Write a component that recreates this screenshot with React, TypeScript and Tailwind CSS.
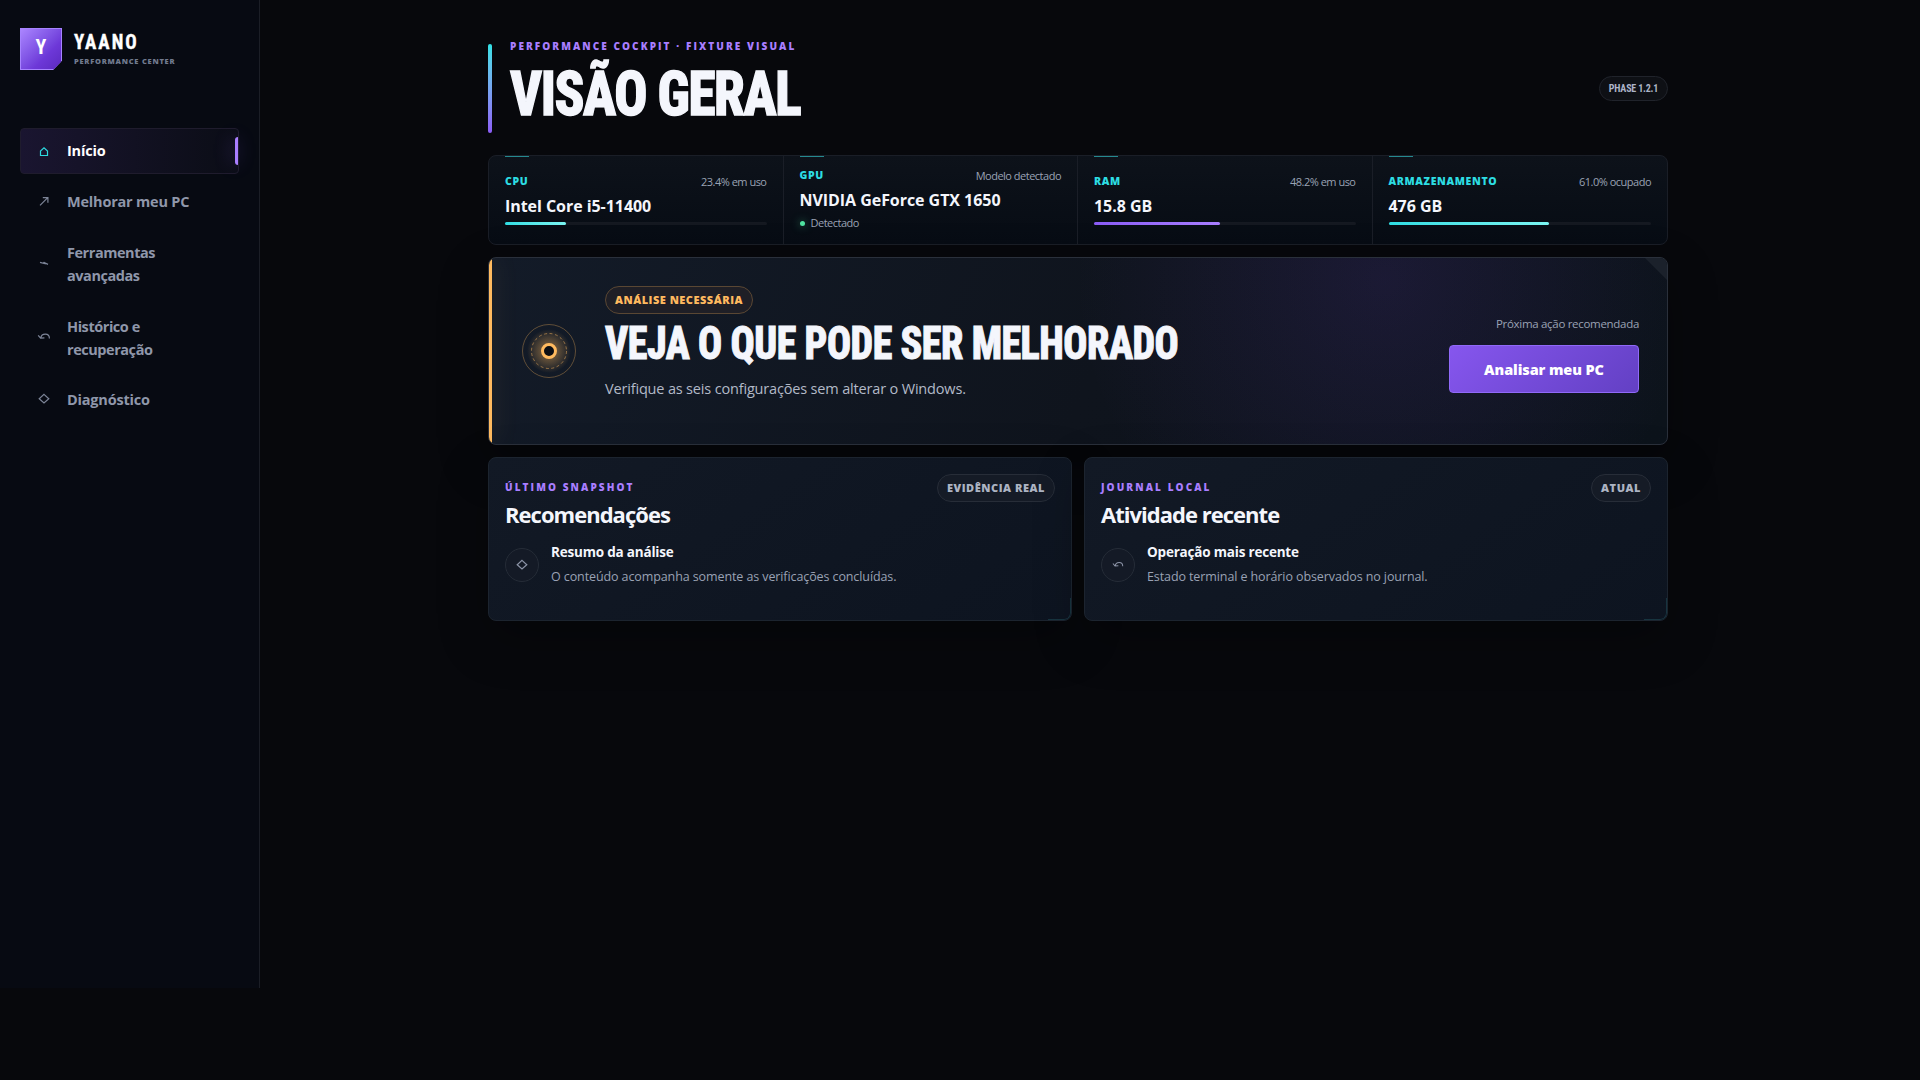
import clsx from "clsx";

type IconName = "home" | "arrow" | "tools" | "undo" | "diamond";

interface NavItemProps {
  label: string;
  icon: IconName;
  active?: boolean;
  tall?: boolean;
}

const navItems: NavItemProps[] = [
  { label: "Início", icon: "home", active: true },
  { label: "Melhorar meu PC", icon: "arrow" },
  { label: "Ferramentas avançadas", icon: "tools", tall: true },
  { label: "Histórico e recuperação", icon: "undo", tall: true },
  { label: "Diagnóstico", icon: "diamond" },
];

const Glyph: React.FC<{ name: IconName; size?: number }> = ({
  name,
  size = 16,
}) => (
  <svg
    width={size}
    height={size}
    viewBox="0 0 16 16"
    fill="none"
    stroke="currentColor"
    strokeWidth={1.2}
  >
    {name === "home" && <path d="M4.5 12.5V8L8 4.8 11.5 8v4.5z" />}
    {name === "arrow" && <path d="M4 12.4 12 4.4M6.8 4.6h5.1v5.1" />}
    {name === "tools" && <path d="M4 7.4 8.6 8.6 7.6 7.2 12 9.4" />}
    {name === "undo" && (
      <path d="M2.2 6.3 4.6 9.2 8.4 8.9M4.7 9C5.6 3.8 13.4 3.6 13.4 9.4" />
    )}
    {name === "diamond" && <path d="M8 3.4 12.8 7.7 8 12 3.2 7.7z" />}
  </svg>
);

const NavItem: React.FC<NavItemProps> = ({ label, icon, active, tall }) => (
  <a
    className={clsx(
      "relative flex items-center rounded-[4px] border pl-[15px] text-[14.5px] leading-[23px] font-bold",
      tall ? "h-[70px] tracking-[-0.45px]" : "h-[46px] tracking-[-0.2px]",
      active
        ? "border-[#1f1c2d] bg-linear-to-r from-[#1a1530] to-[#0b0d16] text-white"
        : "border-transparent text-[#8f97aa]"
    )}
  >
    <span className={clsx("w-4", active ? "text-[#2dd9df]" : "text-[#7d8598]")}>
      <Glyph name={icon} />
    </span>
    <span className={clsx("ml-[15px] w-[130px]", active && "pb-0.5", tall && "pt-0.5")}>
      {label}
    </span>
    {active && (
      <span className="absolute top-2 right-0 h-7 w-[3px] rounded-l-[3px] bg-[#a97eff] shadow-[-2px_0_18px_rgba(139,92,246,0.45)]" />
    )}
  </a>
);

const Sidebar = () => (
  <aside className="h-[988px] w-[260px] shrink-0 border-r border-[#1b1e26] bg-[#070a12] px-5 pt-7">
    <div className="flex h-[42px] gap-3">
      <div className="relative size-[42px] bg-[#a783ff] p-px [clip-path:polygon(0_0,100%_0,100%_78%,79%_100%,0_100%)]">
        <div className="flex h-full items-center justify-center bg-linear-135 from-[#ab85ff] via-[#6d38d8] via-65% to-[#5b29c0] pb-[5px] font-['Roboto_Condensed',sans-serif] text-[20px] font-bold text-white">
          Y
        </div>
      </div>
      <div className="pt-0.5">
        <div className="origin-left scale-x-[0.9] font-['Roboto_Condensed',sans-serif] text-[21px] leading-[24px] font-bold tracking-[2.3px] text-white [-webkit-text-stroke:0.4px_white]">
          YAANO
        </div>
        <div className="mt-0.5 text-[7.5px] leading-[10px] font-extrabold tracking-[0.75px] text-[#717a8e]">
          PERFORMANCE CENTER
        </div>
      </div>
    </div>
    <nav className="mt-[58px] flex w-[219px] flex-col gap-1">
      {navItems.map((item) => (
        <NavItem key={item.label} {...item} />
      ))}
    </nav>
  </aside>
);

interface StatProps {
  label: string;
  detail: string;
  value: string;
  percent?: number;
  violet?: boolean;
  status?: string;
}

const stats: StatProps[] = [
  { label: "CPU", detail: "23.4% em uso", value: "Intel Core i5-11400", percent: 23.4 },
  { label: "GPU", detail: "Modelo detectado", value: "NVIDIA GeForce GTX 1650", status: "Detectado" },
  { label: "RAM", detail: "48.2% em uso", value: "15.8 GB", percent: 48.2, violet: true },
  { label: "ARMAZENAMENTO", detail: "61.0% ocupado", value: "476 GB", percent: 61 },
];

const Stat: React.FC<StatProps> = ({ label, detail, value, percent, violet, status }) => (
  <div
    className={clsx(
      "relative border-r border-[#1a1e27] px-4 last:border-r-0",
      status ? "pt-2.5" : "pt-4"
    )}
  >
    <span className="absolute top-0 left-4 h-px w-6 bg-[#25898f]" />
    <div className="flex h-5 items-center justify-between">
      <span className="text-[10.5px] font-extrabold tracking-[0.65px] text-[#2ddde3]">
        {label}
      </span>
      <span className="text-[11px] tracking-[-0.5px] text-[#9aa2b4]">{detail}</span>
    </div>
    <div className="mt-0.5 h-6 text-[16px] leading-6 font-bold tracking-[-0.05px] text-[#f4f6fc]">
      {value}
    </div>
    {status ? (
      <div className="mt-0.5 flex h-[18px] items-center gap-1.5 text-[11px] tracking-[-0.5px] text-[#9aa2b4]">
        <span className="size-[5px] rounded-full bg-[#4fe3a1] shadow-[0_0_8px_rgba(79,227,161,0.6)]" />
        {status}
      </div>
    ) : (
      <div className="mt-1 h-[3px] rounded-full bg-[#151921]">
        <div
          className={clsx(
            "h-full rounded-full bg-linear-to-r",
            violet ? "from-[#8b5cf6] to-[#a97eff]" : "from-[#2ddde3] to-[#7af5f2]"
          )}
          style={{ width: `${percent}%` }}
        />
      </div>
    )}
  </div>
);

const Hero = () => (
  <section className="relative mt-3 flex h-[188px] items-center overflow-hidden rounded-lg border border-[#2a303b] bg-[radial-gradient(circle_at_76%_12%,rgba(124,70,225,0.12),transparent_34%),linear-gradient(115deg,#131b28,#0f141d_52%,#0c131b)] shadow-[0_18px_50px_rgba(0,0,0,0.32)]">
    <span className="absolute inset-y-0 left-0 w-[3px] bg-[#ffba5f] shadow-[0_0_24px_rgba(255,186,95,0.3)]" />
    <span className="absolute top-0 right-0 size-[22px] bg-[#1b212b] [clip-path:polygon(0_0,100%_0,100%_100%)]" />
    <svg className="ml-[33px] size-[54px] shrink-0" viewBox="0 0 54 54" fill="none" stroke="#ffba5f">
      <defs>
        <radialGradient id="orb">
          <stop offset="0.3" stopColor="#ffba5f" stopOpacity="0.38" />
          <stop offset="1" stopColor="#ffba5f" stopOpacity="0" />
        </radialGradient>
      </defs>
      <circle cx="27" cy="27" r="22" fill="url(#orb)" stroke="none" />
      <circle cx="27" cy="27" r="26.5" strokeOpacity="0.33" />
      <circle cx="27" cy="27" r="17.5" strokeOpacity="0.5" strokeDasharray="3 2.5" />
      <circle cx="27" cy="27" r="6.5" fill="#0b0e14" strokeWidth="3" />
    </svg>
    <div className="ml-[29px] h-[130px]">
      <span className="flex h-7 w-[148px] items-center justify-center rounded-full border border-[#5a4733] bg-[#1f1f26] text-[11px] font-extrabold tracking-[0.5px] whitespace-nowrap text-[#ffba5f]">
        ANÁLISE NECESSÁRIA
      </span>
      <h2 className="mt-1.5 h-[46px] w-max origin-left scale-x-[0.88] font-['Roboto_Condensed',sans-serif] text-[45.5px] leading-[47px] font-extrabold tracking-[-0.55px] whitespace-nowrap text-[#f4f6fc] [-webkit-text-stroke:1px_#f4f6fc]">
        VEJA O QUE PODE SER MELHORADO
      </h2>
      <p className="mt-[11px] text-[14.5px] leading-6 tracking-[-0.17px] text-[#b3bac8]">
        Verifique as seis configurações sem alterar o Windows.
      </p>
    </div>
    <div className="mr-7 ml-auto flex flex-col items-end pt-[5px]">
      <span className="text-[11.5px] leading-5 tracking-[-0.3px] text-[#9aa2b4]">Próxima ação recomendada</span>
      <button className="mt-[11px] h-12 w-[190px] rounded-[4px] border border-[#9069f8] bg-linear-135 from-[#8656ee] to-[#6340c4] pt-px text-[14.5px] font-extrabold tracking-[-0.1px] text-white">
        Analisar meu PC
      </button>
    </div>
  </section>
);

interface PanelProps {
  eyebrow: string;
  title: string;
  tag: string;
  icon: IconName;
  heading: string;
  text: string;
}

const Panel: React.FC<PanelProps> = ({ eyebrow, title, tag, icon, heading, text }) => (
  <section className="relative h-[164px] overflow-hidden rounded-lg border border-[#1c242f] bg-linear-145 from-[#121925] to-[#0d1420] px-4 pt-4 shadow-[0_18px_50px_rgba(0,0,0,0.28)]">
    <div className="flex items-start justify-between">
      <div>
        <div className="mt-[3px] text-[10px] leading-5 font-extrabold tracking-[2.1px] text-[#a97eff]">
          {eyebrow}
        </div>
        <h3 className="mt-px text-[22px] leading-[32px] font-bold tracking-[-0.98px] text-[#f4f6fc]">
          {title}
        </h3>
      </div>
      <span className="flex h-7 items-center rounded-full border border-[#272d38] bg-[#151b26] px-[9px] text-[11px] font-extrabold tracking-[0.54px] text-[#adb4c3]">
        {tag}
      </span>
    </div>
    <div className="mt-3 flex gap-3">
      <span className="mt-1.5 flex size-[34px] items-center justify-center rounded-full border border-[#252c37] bg-[#141a26] text-[#8d95a8]">
        <Glyph name={icon} size={icon === "undo" ? 14 : 16} />
      </span>
      <div>
        <div className="h-5 text-[13.5px] leading-5 font-bold tracking-[-0.2px] text-[#f4f6fc]">
          {heading}
        </div>
        <p className="mt-[5px] text-[12.5px] leading-5 tracking-[-0.1px] text-[#9aa2b4]">
          {text}
        </p>
      </div>
    </div>
    <span className="absolute right-0 bottom-0 h-[22px] w-[23px] rounded-br-[7px] border-r border-b border-[#17343f]" />
  </section>
);

const App = () => {
  return (
    <div className="flex min-h-[1080px] w-full bg-[#07080c] font-['Open_Sans','Noto_Sans',sans-serif]">
      <Sidebar />
      <main className="flex-1">
        <div className="ml-[228px] w-[1180px] pt-9">
          <header className="flex h-[119px]">
            <span className="mt-2 h-[89px] w-1 rounded-full bg-linear-to-b from-[#2de2e6] to-[#8b5cf6]" />
            <div className="ml-[18px]">
              <div className="text-[10px] leading-5 font-extrabold tracking-[2.08px] text-[#a97eff]">
                PERFORMANCE COCKPIT · FIXTURE VISUAL
              </div>
              <h1 className="mt-[5px] w-max origin-left scale-x-[0.89] font-['Roboto_Condensed',sans-serif] text-[62px] leading-[65px] font-extrabold tracking-[-1.6px] text-[#f4f6fc] [-webkit-text-stroke:1.4px_#f4f6fc]">
                VISÃO GERAL
              </h1>
            </div>
            <span className="mt-10 ml-auto flex h-[25px] w-[69px] items-center justify-center rounded-full border border-[#20232b] bg-[#0e1015] font-['Roboto_Condensed',sans-serif] text-[10px] font-bold tracking-[-0.2px] text-[#adb4c8]">
              PHASE 1.2.1
            </span>
          </header>
          <section className="grid h-[90px] grid-cols-4 overflow-hidden rounded-lg border border-[#1a1e27] bg-linear-to-b from-[#0d121a] to-[#070c14]">
            {stats.map((stat) => (
              <Stat key={stat.label} {...stat} />
            ))}
          </section>
          <Hero />
          <div className="mt-3 grid grid-cols-2 gap-3">
            <Panel
              eyebrow="ÚLTIMO SNAPSHOT"
              title="Recomendações"
              tag="EVIDÊNCIA REAL"
              icon="diamond"
              heading="Resumo da análise"
              text="O conteúdo acompanha somente as verificações concluídas."
            />
            <Panel
              eyebrow="JOURNAL LOCAL"
              title="Atividade recente"
              tag="ATUAL"
              icon="undo"
              heading="Operação mais recente"
              text="Estado terminal e horário observados no journal."
            />
          </div>
        </div>
      </main>
    </div>
  );
};

export default App;
